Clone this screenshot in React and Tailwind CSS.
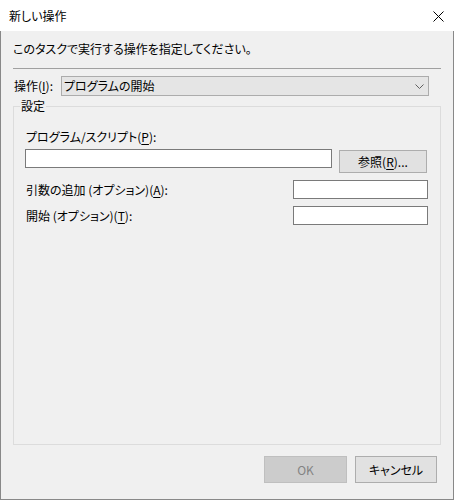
import React from 'react';

const font = "font-['Noto_Sans_CJK_JP','Noto_Sans',sans-serif] [font-feature-settings:'palt']";

function Key({ children }) {
  return <span className="underline underline-offset-2">{children}</span>;
}

export default function App() {
  return (
    <div className={`w-[454px] h-[500px] flex flex-col text-[12px] leading-[16px] text-black ${font}`}>
      {/* title bar */}
      <div className="h-[31px] bg-white flex items-center justify-between pl-[9px] pr-[10px] shrink-0">
        <span>新しい操作</span>
        <svg width="11" height="11" viewBox="0 0 11 11" className="mt-px">
          <path d="M0.5 0.5 L10.5 10.5 M10.5 0.5 L0.5 10.5" stroke="#000" strokeWidth="1" />
        </svg>
      </div>

      <div className="flex-1 flex flex-col bg-[#f0f0f0] border-x border-b border-[#888888] px-[12px] pt-[10px] pb-[16px]">
        <p>このタスクで実行する操作を指定してください。</p>
        <div className="mt-[11px] h-px bg-[#a0a0a0]" />

        {/* action combo */}
        <div className="mt-[7px] flex items-center">
          <span className="w-[48px] pl-px">操作(<Key>I</Key>):</span>
          <div className="w-[368px] h-[20px] bg-[#e5e5e5] border border-[#acacac] flex items-center justify-between pl-[2px] pr-[4px]">
            <span>プログラムの開始</span>
            <svg width="9" height="5" viewBox="0 0 9 5">
              <path d="M0.5 0.5 L4.5 4.5 L8.5 0.5" stroke="#606060" strokeWidth="1" fill="none" />
            </svg>
          </div>
        </div>

        {/* settings group */}
        <fieldset className="mt-[2px] flex-1 border border-[#dcdcdc] pl-[11px] pr-[12px] pt-[15px]">
          <legend className="-ml-[5px] px-px">設定</legend>

          <p className="pl-px">プログラム/スクリプト(<Key>P</Key>):</p>
          <div className="mt-[4px] flex items-start gap-[7px]">
            <div className="w-[307px] h-[19px] bg-white border border-[#7a7a7a]" />
            <button className="mt-px w-[88px] h-[23px] bg-[#e1e1e1] border border-[#adadad] flex items-center justify-center">
              参照(<Key>R</Key>)...
            </button>
          </div>

          <div className="mt-[7px] flex items-center justify-between">
            <span className="pl-px">引数の追加 (オプション)(<Key>A</Key>):</span>
            <div className="w-[135px] h-[19px] bg-white border border-[#7a7a7a]" />
          </div>
          <div className="mt-[7px] flex items-center justify-between">
            <span className="pl-px">開始 (オプション)(<Key>T</Key>):</span>
            <div className="w-[135px] h-[19px] bg-white border border-[#7a7a7a]" />
          </div>
        </fieldset>

        {/* buttons */}
        <div className="mt-[11px] flex justify-end gap-[8px] pr-[4px]">
          <button disabled className="w-[83px] h-[27px] bg-[#cccccc] border border-[#bfbfbf] text-[#838383]">
            OK
          </button>
          <button className="w-[82px] h-[27px] bg-[#e1e1e1] border border-[#adadad]">
            キャンセル
          </button>
        </div>
      </div>
    </div>
  );
}
